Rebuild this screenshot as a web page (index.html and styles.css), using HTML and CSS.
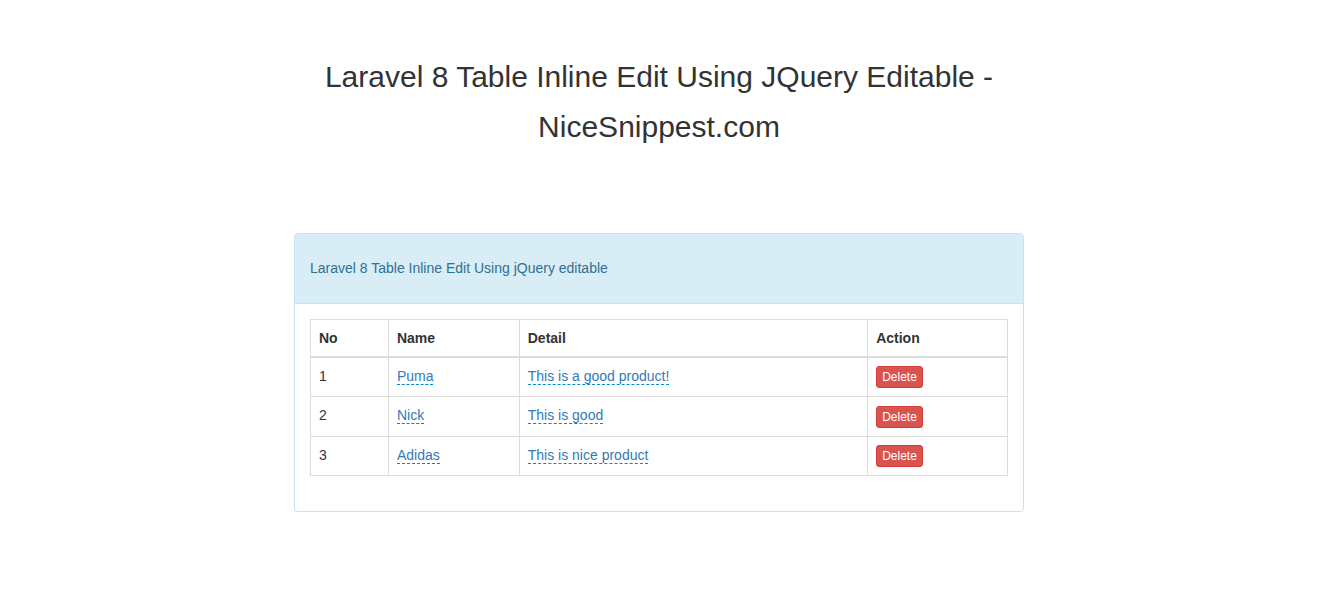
FILE: index.html
```html
<!DOCTYPE html>
<html>
<head>
<meta charset="utf-8">
<title>Laravel 8 Table Inline Edit</title>
<link rel="stylesheet" href="styles.css">
</head>
<body>
<div class="page">
  <h1 class="title">Laravel 8 Table Inline Edit Using JQuery Editable -<br>NiceSnippest.com</h1>
  <div class="panel">
    <div class="panel-heading">Laravel 8 Table Inline Edit Using jQuery editable</div>
    <div class="panel-body">
      <table class="table">
        <thead>
          <tr>
            <th class="c1">No</th>
            <th class="c2">Name</th>
            <th class="c3">Detail</th>
            <th class="c4">Action</th>
          </tr>
        </thead>
        <tbody>
          <tr>
            <td>1</td>
            <td><a class="editable">Puma</a></td>
            <td><a class="editable">This is a good product!</a></td>
            <td><button class="btn-del">Delete</button></td>
          </tr>
          <tr>
            <td>2</td>
            <td><a class="editable">Nick</a></td>
            <td><a class="editable">This is good</a></td>
            <td><button class="btn-del">Delete</button></td>
          </tr>
          <tr>
            <td>3</td>
            <td><a class="editable">Adidas</a></td>
            <td><a class="editable">This is nice product</a></td>
            <td><button class="btn-del">Delete</button></td>
          </tr>
        </tbody>
      </table>
    </div>
  </div>
</div>
</body>
</html>
```
FILE: styles.css
```css
* { box-sizing: border-box; }
html, body { margin: 0; padding: 0; background: #fff; }
body {
  font-family: "Liberation Sans", Arial, Helvetica, sans-serif;
  font-size: 14px;
  line-height: 20px;
  color: #333;
}
.page {
  width: 1318px;
  padding-top: 52px;
}
.title {
  margin: 0;
  text-align: center;
  font-size: 30px;
  font-weight: normal;
  line-height: 50px;
  color: #333;
}
.panel {
  width: 730px;
  margin: 81px auto 0;
  border: 1px solid #bce8f1;
  border-radius: 4px;
  box-shadow: 0 1px 1px rgba(0,0,0,0.05);
}
.panel-heading {
  background: #d9edf7;
  color: #31708f;
  padding: 24px 15px 25px;
  border-bottom: 1px solid #bce8f1;
  border-radius: 3px 3px 0 0;
}
.panel-body {
  padding: 15px;
}
.table {
  width: 100%;
  border-collapse: collapse;
  border: 1px solid #ddd;
  margin-bottom: 20px;
}
.table th, .table td {
  border: 1px solid #ddd;
  padding: 8px;
  text-align: left;
  vertical-align: top;
  line-height: 20px;
}
.table thead th {
  border-bottom-width: 2px;
  font-weight: bold;
}
.c1 { width: 78px; }
.c2 { width: 131px; }
.c3 { width: 349px; }
.c4 { width: 140px; }
.editable {
  color: #337ab7;
  text-decoration: none;
  border-bottom: 1px dashed #0088cc;
}
.btn-del {
  font-family: inherit;
  font-size: 12px;
  line-height: 18px;
  padding: 1px 5px;
  color: #fff;
  background: #d9534f;
  border: 1px solid #d43f3a;
  border-radius: 3px;
  display: inline-block;
  vertical-align: middle;
}
```
